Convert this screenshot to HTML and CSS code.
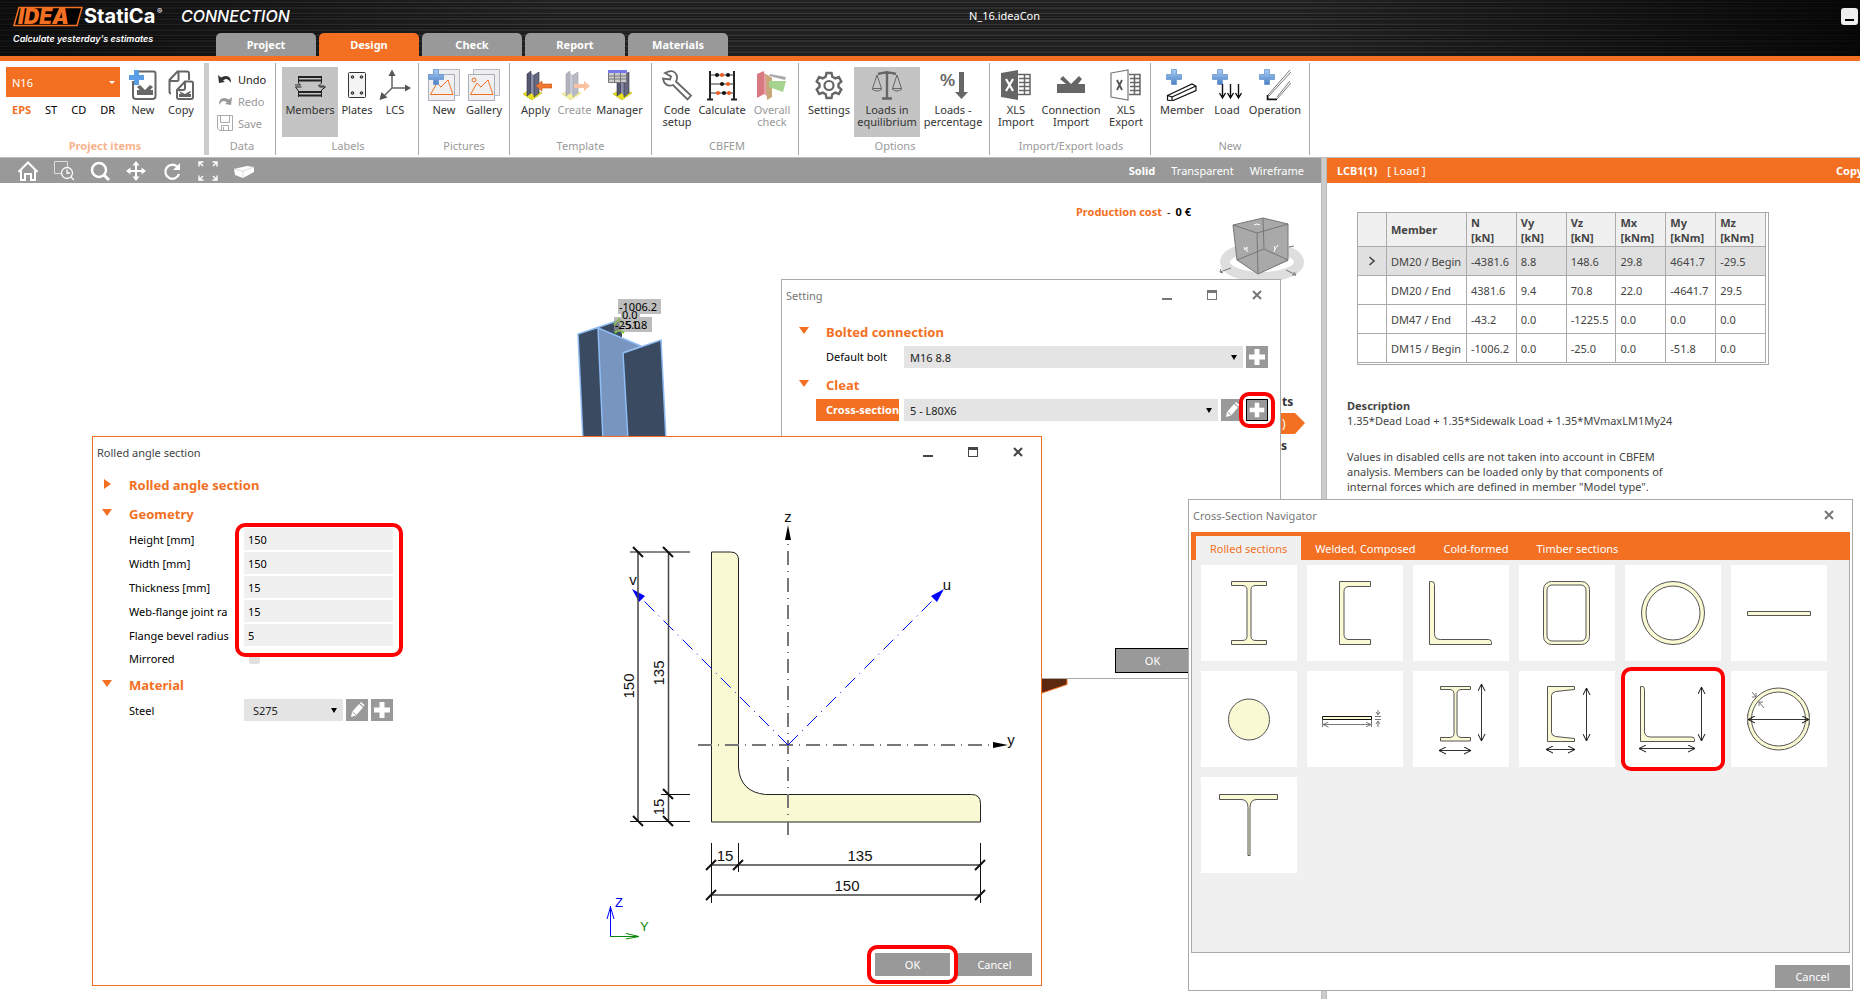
FILE: index.html
```html
<!DOCTYPE html>
<html lang="en">
<head>
<meta charset="utf-8">
<title>N_16.ideaCon</title>
<link rel="stylesheet" href="styles.css">
</head>
<body>
<svg class="defs" aria-hidden="true">
  <defs>
    <linearGradient id="blue" x1="0" y1="0" x2="0" y2="1"><stop offset="0" stop-color="#a9cdf2"/><stop offset="1" stop-color="#4a7fc4"/></linearGradient>
    <symbol id="cross" viewBox="0 0 16 16"><path d="M5.500.5h5v5h5v5h-5v5h-5v-5h-5v-5h5z" fill="url(#blue)" stroke="#6a98d0" stroke-width=".8"/></symbol>
    <symbol id="plus" viewBox="0 0 22 22"><path d="M8.500 3h5v5.500H19v5h-5.500V19h-5v-5.500H3v-5h5.500z" fill="#fff"/></symbol>
    <symbol id="pencil" viewBox="0 0 22 22"><path d="M5 18l1-5 7-8 4 3.500-7 8z" fill="#fff"/><path d="M13.800 4.200L15 3l3.500 3-1 1.500z" fill="#fff"/><path d="M6.500 13l3.500 3" stroke="#999"/></symbol>
    <symbol id="pic" viewBox="0 0 32 32"><path d="M5.500 .5h26v26h-26z" fill="#eee" stroke="#b4b8c4"/><path d="M.5 5.500h26v26H.5z" fill="#f0f0f0" stroke="#a9aebb"/><path d="M2.500 25.500L9 14l4 4 7-7 5 14.500z" fill="none" stroke="#f37023"/></symbol>
    <symbol id="column" viewBox="0 0 32 32"><path d="M3 25l9-5 10 4-10 7z" fill="#e8e020" stroke="#b0aa00" stroke-dasharray="1 1"/><path d="M7 5l4-3v22l-4 3z" fill="#555870" stroke="#303448" stroke-width=".6"/><path d="M11 4l4 3v20l-4-3z" fill="#8a90a8"/><path d="M14 6l5-3v21l-5 4z" fill="#66697f" stroke="#303448" stroke-width=".6"/></symbol>
    <marker id="oa" viewBox="0 0 8 8" refX="7" refY="4" markerWidth="8" markerHeight="8" markerUnits="userSpaceOnUse" orient="auto-start-reverse"><path d="M0 .5L7 4 0 7.500" fill="none" stroke="#111"/></marker>
    <marker id="sa" viewBox="0 0 6 6" refX="5.500" refY="3" markerWidth="6" markerHeight="6" markerUnits="userSpaceOnUse" orient="auto-start-reverse"><path d="M0 0.500L5.500 3 0 5.500" fill="none" stroke="#777"/></marker>
  </defs>
</svg>

<header class="titlebar">
  <svg class="logo" width="290" height="46" viewBox="0 0 290 46" role="img" aria-label="IDEA StatiCa Connection">
    <path d="M19 7.500h63l-5 18H14z" fill="#000" stroke="#f37023" stroke-width="1.500"/>
    <text x="18" y="24" class="logo-idea">IDEA</text>
    <text x="84" y="23" class="logo-name">StatiCa</text>
    <text x="157" y="14" class="logo-reg">®</text>
    <text x="181" y="22" class="logo-prod">CONNECTION</text>
    <text x="13" y="42" class="logo-tag">Calculate yesterday's estimates</text>
  </svg>
  <nav class="tabs">
    <button>Project</button><button class="on">Design</button><button>Check</button><button>Report</button><button>Materials</button>
  </nav>
  <div class="doc">N_16.ideaCon</div>
  <button class="minwin" aria-label="Minimize"></button>
</header>

<section class="ribbon">
  <div class="group g-items">
    <div class="row">
      <div class="proj">
        <div class="projsel"><select aria-label="Project item"><option>N16</option></select></div>
        <div class="modes"><button class="on">EPS</button><button>ST</button><button>CD</button><button>DR</button></div>
      </div>
      <button class="tool w38"><svg width="32" height="32" viewBox="0 0 32 32"><path d="M11 2.500h15.500q2 0 2 2V27q0 3-3 3H9q-3 0-3-3V12" fill="none" stroke="#666" stroke-width="2"/><path d="M10 18l3-2 5 5 5-5 3 2-3 3h3v5H10v-5h3z" fill="#666"/><path d="M7 1h5v5h5v5h-5v5H7v-5H2V6h5z" fill="#5b9ee5"/></svg><span>New</span></button>
      <button class="tool w38"><svg width="32" height="32" viewBox="0 0 32 32"><path d="M6 24.500q-1.500 0-1.500-2V11l8-8.500H22q2 0 2 2V11M4.500 12H12q1.500 0 1.500-1.500V3" fill="none" stroke="#666" stroke-width="2"/><path d="M12 21l8-8.500h6q2 0 2 2V28q0 2-2 2H14q-2 0-2-2zM12 21h6q2 0 2-2v-6" fill="#fff" stroke="#666" stroke-width="2"/><path d="M14 22l6 3 5-3 1 1-2 2h2v3H14v-3h2z" fill="#666"/></svg><span>Copy</span></button>
    </div>
    <h2 class="hot">Project items</h2>
  </div>
  <div class="group g-data">
    <div class="stack">
      <button><svg width="16" height="16" viewBox="0 0 16 16"><path d="M1 4l1 8 6-1-2-1.500q4-4 8 2.500Q14 2 4 6.500z" fill="#333"/></svg>Undo</button>
      <button class="off"><svg width="16" height="16" viewBox="0 0 16 16"><path d="M15 4l-1 8-6-1 2-1.500Q6 5.500 2 12 2 2 12 6.500z" fill="#999"/></svg>Redo</button>
      <button class="off"><svg width="16" height="16" viewBox="0 0 16 16"><path d="M.5.500h15v15H3l-2.500-2zM3.500.500v7h9v-7M4.500 15.500v-5h7v5M6.500 12v3" fill="none" stroke="#aaa"/></svg>Save</button>
    </div>
    <h2>Data</h2>
  </div>
  <div class="group g-labels">
    <div class="row">
      <button class="tool w56 sel"><svg width="32" height="32" viewBox="0 0 32 32"><path d="M4.500 8h23M4.500 11.500h23M4.500 23h23M4.500 26.500h23" stroke="#222" stroke-width="2"/><path d="M4.500 7v7l2 2H1M4.500 28v-6l-3-4h6M27.500 7v7l-3 3h6M27.500 28v-7l4-3h-6" fill="none" stroke="#222"/></svg><span>Members</span></button>
      <button class="tool w38"><svg width="32" height="32" viewBox="0 0 32 32"><rect x="7.500" y="3.500" width="17" height="25" rx="1" fill="#f4f4f4" stroke="#333"/><g fill="#999" stroke="#222"><circle cx="11.500" cy="8" r="1.300"/><circle cx="20.500" cy="8" r="1.300"/><circle cx="11.500" cy="24" r="1.300"/><circle cx="20.500" cy="24" r="1.300"/></g></svg><span>Plates</span></button>
      <button class="tool w38"><svg width="32" height="32" viewBox="0 0 32 32"><path d="M13 3v16h15M13 19L3 29" fill="none" stroke="#666" stroke-width="1.500"/><path d="M9.500 7L13 .5 16.500 7zM26 15.500l6 3.500-6 3.500zM.5 31l2-8 6 5.500z" fill="#555"/></svg><span>LCS</span></button>
    </div>
    <h2>Labels</h2>
  </div>
  <div class="group g-pics">
    <div class="row">
      <button class="tool w40"><svg width="32" height="32"><use href="#pic"/><use href="#cross" width="16" height="16"/></svg><span>New</span></button>
      <button class="tool w40"><svg width="32" height="32"><use href="#pic"/><circle cx="6" cy="11" r="2" fill="none" stroke="#f37023"/></svg><span>Gallery</span></button>
    </div>
    <h2>Pictures</h2>
  </div>
  <div class="group g-temp">
    <div class="row">
      <button class="tool w38"><svg width="32" height="32" viewBox="0 0 32 32"><use href="#column" width="32" height="32"/><path d="M16 17l6-5v3h10v4H22v3z" fill="#f07830" stroke="#c85818" stroke-width=".6"/></svg><span>Apply</span></button>
      <button class="tool w40 off"><svg width="32" height="32" viewBox="0 0 32 32"><g opacity=".45"><use href="#column" width="32" height="32"/><path d="M31 17l-6-5v3H15v4h10v3z" fill="#f07830"/></g></svg><span>Create</span></button>
      <button class="tool w50"><svg width="32" height="32" viewBox="0 0 32 32"><use href="#column" x="6" width="32" height="32"/><path d="M4.500 1.500h18v12h-18z" fill="#ccc" stroke="#777"/><path d="M4 1h19v3H4z" fill="#7878e8"/><path d="M5 7h18M5 10h18M10.500 4v10M16.500 4v10" stroke="#777"/></svg><span>Manager</span></button>
    </div>
    <h2>Template</h2>
  </div>
  <div class="group g-cbfem">
    <div class="row">
      <button class="tool w40"><svg width="32" height="32" viewBox="0 0 32 32"><path d="M4 4q9-5 12 3 .5 3-1 5.500L30 26.500l-3.500 4L12 16q-6 2-9-3L2 9.500l7 1 1-3z" fill="#fff" stroke="#666" stroke-width="1.800"/></svg><span>Code<br>setup</span></button>
      <button class="tool w50"><svg width="32" height="32" viewBox="0 0 32 32"><path d="M4 2v28M28 2v28M1 30.500h6M25 30.500h6" stroke="#222" stroke-width="2"/><path d="M4 6h24M4 15h24M4 24h24" stroke="#333"/><g fill="#111"><circle cx="11" cy="6" r="2"/><circle cx="22" cy="6" r="2"/><circle cx="16" cy="15" r="2"/><circle cx="18" cy="24" r="2"/></g><g fill="#f05a1a"><circle cx="16" cy="6" r="2"/><circle cx="22" cy="15" r="2"/><circle cx="12" cy="24" r="2"/><circle cx="23" cy="24" r="2"/></g></svg><span>Calculate</span></button>
      <button class="tool w50 off"><svg width="32" height="32" viewBox="0 0 32 32"><path d="M1 5l7-3v23l-7 4z" fill="#d97880"/><path d="M8 4l3 2v21l-3-2z" fill="#e0a0a0"/><path d="M10 5l6 4v19l-5 3z" fill="#c8a878"/><path d="M14 5l16 3-1 3-16-4z" fill="#aaa"/><path d="M13 12l17 0-3 11-14-5z" fill="#a6d490"/></svg><span>Overall<br>check</span></button>
    </div>
    <h2>CBFEM</h2>
  </div>
  <div class="group g-opts">
    <div class="row">
      <button class="tool w50"><svg width="32" height="32" viewBox="0 0 32 32"><path d="M13.500 4h5l.8 3.700 3 1.700 3.500-1.300 2.500 4.400-2.800 2.500v3l2.800 2.500-2.500 4.400-3.500-1.300-3 1.700-.8 3.700h-5l-.8-3.700-3-1.700-3.500 1.300-2.500-4.400L6.500 18v-3l-2.800-2.500 2.500-4.400 3.500 1.300 3-1.700z" fill="none" stroke="#666" stroke-width="2.400"/><circle cx="16" cy="16.500" r="4.500" fill="none" stroke="#666" stroke-width="2.200"/></svg><span>Settings</span></button>
      <button class="tool w66 sel"><svg width="32" height="32" viewBox="0 0 32 32"><path d="M16 2v27M7 5q9-3 18 0M11 29.500h10" fill="none" stroke="#666" stroke-width="2.400"/><path d="M6 6L1.500 19.500h9zM26 6l-4.500 13.500h9zM1 20q5 4 10 0M21 20q5 4 10 0" fill="none" stroke="#666"/></svg><span>Loads in<br>equilibrium</span></button>
      <button class="tool w66"><svg width="32" height="32" viewBox="0 0 32 32"><text x="3" y="17" class="pct">%</text><path d="M22 3h5v20h4l-6.500 7L18 23h4z" fill="#666"/></svg><span>Loads -<br>percentage</span></button>
    </div>
    <h2>Options</h2>
  </div>
  <div class="group g-io">
    <div class="row">
      <button class="tool w40"><svg width="32" height="32" viewBox="0 0 32 32"><path d="M1 4l17-3v30L1 28z" fill="#666"/><path d="M6 10l7 12M13 10L6 22" stroke="#fff" stroke-width="2.200"/><path d="M18 5.500h12v20H18M19 9.500h11M19 13.500h11M19 17.500h11M19 21.500h11M24.500 5v20" fill="none" stroke="#666" stroke-width="1.500"/></svg><span>XLS<br>Import</span></button>
      <button class="tool w70"><svg width="32" height="32" viewBox="0 0 32 32"><path d="M2 15h9L5 10l3-3 8 8 8-8 3 3-4 5h7v9H2z" fill="#666"/></svg><span>Connection<br>Import</span></button>
      <button class="tool w40"><svg width="32" height="32" viewBox="0 0 32 32"><path d="M1 4l17-3v30L1 28z" fill="#fff" stroke="#777" stroke-width="1.200"/><path d="M7 11l5 10M12 11L7 21" stroke="#555" stroke-width="1.800"/><path d="M19 5.500h11v20H19M20 9.500h10M20 13.500h10M20 17.500h10M20 21.500h10M24.500 5v20" fill="none" stroke="#666" stroke-width="1.500"/></svg><span>XLS<br>Export</span></button>
    </div>
    <h2>Import/Export loads</h2>
  </div>
  <div class="group g-new">
    <div class="row">
      <button class="tool w50"><svg width="32" height="32" viewBox="0 0 32 32"><use href="#cross" width="16" height="16"/><path d="M1.500 26.500L26 15l4 2v4.500L6 32M1.500 26.500L6 28v4l-4.500-1zM6 28l24-11" fill="none" stroke="#111" stroke-width="1.200"/></svg><span>Member</span></button>
      <button class="tool w40"><svg width="32" height="32" viewBox="0 0 32 32"><use href="#cross" x="1" width="16" height="16"/><path d="M11.500 15v13M8.500 24l3 5 3-5M19.500 15v13M16.500 24l3 5 3-5M27.500 15v13M24.500 24l3 5 3-5" fill="none" stroke="#111" stroke-width="1.400"/></svg><span>Load</span></button>
      <button class="tool w56"><svg width="32" height="32" viewBox="0 0 32 32"><use href="#cross" width="16" height="16"/><path d="M31 1L9 26v4h9l14-16M32 3L10 27M31 12L18 28" fill="none" stroke="#777"/><path d="M8.500 26v4.500H18" fill="none" stroke="#111" stroke-width="1.600"/></svg><span>Operation</span></button>
    </div>
    <h2>New</h2>
  </div>
</section>

<main class="work">
  <section class="view">
    <div class="viewbar">
      <div class="viewtools">
        <button aria-label="Home"><svg width="20" height="20" viewBox="0 0 20 20"><path d="M.5 11L10 1.500l9.500 9.500M3 9.500v9.500h4v-6h6v6h4V9.500" fill="none" stroke="#fff" stroke-width="2"/></svg></button>
        <button aria-label="Zoom window"><svg width="20" height="20" viewBox="0 0 20 20"><path d="M7 12.500H.5V.5h13V6" fill="none" stroke="#ddd"/><circle cx="13" cy="12" r="5.500" fill="none" stroke="#fff" stroke-width="1.300"/><path d="M13 8.500V12h3M17 16l3 3" fill="none" stroke="#fff" stroke-width="1.300"/></svg></button>
        <button aria-label="Zoom"><svg width="20" height="20" viewBox="0 0 20 20"><circle cx="9" cy="9" r="7" fill="none" stroke="#fff" stroke-width="2.500"/><path d="M14 14l5 5" stroke="#fff" stroke-width="3"/></svg></button>
        <button aria-label="Pan"><svg width="20" height="20" viewBox="0 0 20 20"><path d="M10 2v16M2 10h16" stroke="#fff" stroke-width="2"/><path d="M6.500 4.500L10 0l3.500 4.500zM6.500 15.500L10 20l3.500-4.500zM4.500 6.500L0 10l4.500 3.500zM15.500 6.500L20 10l-4.500 3.500z" fill="#fff"/></svg></button>
        <button aria-label="Rotate"><svg width="20" height="20" viewBox="0 0 20 20"><path d="M15 5.500A7 7 0 1 0 17 13" fill="none" stroke="#fff" stroke-width="2.300"/><path d="M18 2v7h-7z" fill="#fff"/></svg></button>
        <button aria-label="Fit"><svg width="20" height="20" viewBox="0 0 20 20"><path d="M1 5.500V1h4.500M1 1l4 4M14.500 1H19v4.500M19 1l-4 4M1 14.500V19h4.500M1 19l4-4M19 14.500V19h-4.500M19 19l-4-4" fill="none" stroke="#fff" stroke-width="1.400"/></svg></button>
        <button aria-label="Solid view"><svg width="20" height="20" viewBox="0 0 20 20"><path d="M0 8l13-3 7 1v5l-11 6-8-3z" fill="#fff"/><path d="M0 8l9 2 11-4M9 10v7" fill="none" stroke="#ccc" stroke-width=".7"/></svg></button>
      </div>
      <div class="viewmodes"><button class="on">Solid</button><button>Transparent</button><button>Wireframe</button></div>
    </div>
    <p class="cost"><b>Production cost</b> <span>-</span> <strong>0 €</strong></p>
  </section>
  <div class="splitter"></div>
  <section class="panel">
    <div class="panelbar"><b>LCB1(1)</b><span>[ Load ]</span><button>Copy</button></div>
    <div class="tablebox">
      <table>
        <thead><tr><th class="c0"></th><th class="c1">Member</th><th>N<br>[kN]</th><th>Vy<br>[kN]</th><th>Vz<br>[kN]</th><th>Mx<br>[kNm]</th><th>My<br>[kNm]</th><th>Mz<br>[kNm]</th></tr></thead>
        <tbody>
          <tr class="cur"><td><svg width="8" height="10" viewBox="0 0 8 10"><path d="M1.500 1l4.500 4-4.500 4" fill="none" stroke="#444" stroke-width="1.600"/></svg></td><td>DM20 / Begin</td><td>-4381.6</td><td>8.8</td><td>148.6</td><td>29.8</td><td>4641.7</td><td>-29.5</td></tr>
          <tr><td></td><td>DM20 / End</td><td>4381.6</td><td>9.4</td><td>70.8</td><td>22.0</td><td>-4641.7</td><td>29.5</td></tr>
          <tr><td></td><td>DM47 / End</td><td>-43.2</td><td>0.0</td><td>-1225.5</td><td>0.0</td><td>0.0</td><td>0.0</td></tr>
          <tr><td></td><td>DM15 / Begin</td><td>-1006.2</td><td>0.0</td><td>-25.0</td><td>0.0</td><td>-51.8</td><td>0.0</td></tr>
        </tbody>
      </table>
    </div>
    <div class="desc">
      <h3>Description</h3>
      <p>1.35*Dead Load + 1.35*Sidewalk Load + 1.35*MVmaxLM1My24</p>
      <p>Values in disabled cells are not taken into account in CBFEM<br>analysis. Members can be loaded only by that components of<br>internal forces which are defined in member "Model type".</p>
    </div>
  </section>
</main>

<svg class="model" width="110" height="150" viewBox="570 290 110 150">
  <path d="M598 328l20-8 4 14v16z" fill="#3a4a60"/>
  <path d="M578 334l20-6 5 112h-20z" fill="#3a4a60"/>
  <path d="M598 328l43 18-17 6 4 88h-25z" fill="#7795bf"/>
  <path d="M623 353l38-13 5 100h-38z" fill="#3a4a60"/>
  <path d="M617 321l-39 13 5 106M598 328l5 112M598 328l43 18M628 440l-5-87 38-13 5 100" fill="none" stroke="#8fbcf4" stroke-width="1.500"/>
  <path d="M614 325l5-6 4 5M615 333q4-5 9 0" fill="none" stroke="#6fe000" stroke-width="2"/>
  <g fill="#9a9a9a" fill-opacity=".65"><path d="M618 299h43v15h-43zM621 308h19v12h-19zM614 317h38v15h-38zM614 317h27v15h-27z"/></g>
  <g class="tag"><text x="619" y="311">-1006.2</text><text x="622" y="319">0.0</text><text x="615" y="329">-25.0</text><text x="622" y="329">-51.8</text></g>
</svg>
<svg class="cube" width="100" height="74" viewBox="1210 210 100 74">
  <ellipse cx="1262" cy="262" rx="37" ry="15" fill="none" stroke="#dedede" stroke-width="10"/>
  <path d="M1233 225l30-7 25 6 0 37-30 13-21-14z" fill="#a9a9a9"/>
  <path d="M1233 225l30-7 25 6-31 9zM1257 233l1 41M1233 225l4 35 21 14 30-14V224M1263 218l1 31-27 11M1264 249l24 11" fill="none" stroke="#777"/>
  <path d="M1254 225l3-1 3 1M1244 247l1 3 2-3v5M1274 246l1 3 3-4M1275 249l-1 3" fill="none" stroke="#fff"/>
  <path d="M1231 268l-11 4 1-3M1220 272l3 1M1286 270l10 5-4 0M1296 275l-2-3M1289 247l5-1" fill="none" stroke="#777"/>
</svg>
<svg class="arrowtab" width="30" height="66" viewBox="0 0 30 66"><path d="M0 19h14l10 10-10 11H0z" fill="#f37023"/><g class="arrowtxt"><text x="1" y="12">ts</text><text x="1" y="34" class="white">)</text><text x="0" y="56">s</text></g></svg>
<svg class="stub" width="30" height="16" viewBox="0 0 30 16"><path d="M0 0h25v5.500L0 14z" fill="#5c2910"/><path d="M25 0v5.500L0 14" fill="none" stroke="#f37023"/></svg>

<section class="win setting" aria-label="Setting">
  <div class="wtitle"><span>Setting</span><div class="wbtns"><button class="min" aria-label="Minimize"></button><button class="max" aria-label="Maximize"></button><button class="cls" aria-label="Close"><svg width="10" height="10" viewBox="0 0 10 10"><path d="M1 1l8 8M9 1L1 9" stroke="currentColor" stroke-width="2"/></svg></button></div></div>
  <div class="sbody">
    <h3 class="sec open">Bolted connection</h3>
    <div class="srow"><label for="bolt">Default bolt</label><div class="dd"><select id="bolt"><option>M16 8.8</option></select></div><button class="sq" aria-label="Add"><svg><use href="#plus"/></svg></button></div>
    <h3 class="sec open">Cleat</h3>
    <div class="srow"><label for="cs" class="hl">Cross-section</label><div class="dd"><select id="cs"><option>5 - L80X6</option></select></div><button class="sq" aria-label="Edit"><svg><use href="#pencil"/></svg></button><button class="sq focus mark" aria-label="Add"><svg><use href="#plus"/></svg></button></div>
  </div>
  <div class="wfoot"><button class="btn focus">OK</button></div>
</section>

<section class="win rolled" aria-label="Rolled angle section">
  <div class="wtitle"><span>Rolled angle section</span><div class="wbtns"><button class="min" aria-label="Minimize"></button><button class="max" aria-label="Maximize"></button><button class="cls" aria-label="Close"><svg width="10" height="10" viewBox="0 0 10 10"><path d="M1 1l8 8M9 1L1 9" stroke="currentColor" stroke-width="2"/></svg></button></div></div>
  <div class="rbody">
    <form class="form">
      <h3 class="sec shut">Rolled angle section</h3>
      <h3 class="sec open">Geometry</h3>
      <div class="fields">
        <div class="frow"><label for="h">Height [mm]</label><input id="h" type="text" value="150"></div>
        <div class="frow"><label for="w">Width [mm]</label><input id="w" type="text" value="150"></div>
        <div class="frow"><label for="t">Thickness [mm]</label><input id="t" type="text" value="15"></div>
        <div class="frow"><label for="r">Web-flange joint ra</label><input id="r" type="text" value="15"></div>
        <div class="frow"><label for="b">Flange bevel radius</label><input id="b" type="text" value="5"></div>
      </div>
      <div class="frow"><label for="m">Mirrored</label><input id="m" type="checkbox"></div>
      <h3 class="sec open">Material</h3>
      <div class="frow"><label for="s">Steel</label><div class="dd"><select id="s"><option>S275</option></select></div><button type="button" class="sq" aria-label="Edit"><svg><use href="#pencil"/></svg></button><button type="button" class="sq" aria-label="Add"><svg><use href="#plus"/></svg></button></div>
    </form>
    <svg class="draw" width="440" height="440" viewBox="0 0 440 440">
      <path d="M121.500 62h19q8 0 8 8v208q2 24 27 26.500h206q9 0 9 9v18.500H121.500z" fill="#f9f9d3" stroke="#222"/>
      <path d="M198 345V51" stroke="#777" stroke-width="2" stroke-dasharray="14 6 1 6"/>
      <path d="M108 255h295" stroke="#777" stroke-width="2" stroke-dasharray="14 6 1 6"/>
      <path d="M198 35l3 15h-6zM418 255l-15-3v6z" fill="#000"/>
      <g fill="none" stroke="#00f" stroke-dasharray="14 6 1 6"><path d="M198 255L52 109"/><path d="M198 255L344 109"/></g>
      <path d="M42 99l13 7-6 6zM354 99l-13 7 6 6z" fill="#00f"/>
      <g stroke="#444" stroke-width="1.500"><path d="M48 62v270M78.500 62v270M121 375h270M121 405h270"/></g>
      <g stroke="#111"><path d="M40 62h60M71 304.500h29M40 331.500h60M121.500 353v60M148.500 353v29M390.500 353v60"/></g>
      <g stroke="#111" stroke-width="2"><path d="M43 57l10 10M73 57l10 10M73 299l10 10M73 326l10 10M43 326l10 10M116 380l10-10M143 380l10-10M385 380l10-10M116 410l10-10M385 410l10-10"/></g>
      <g class="dim">
        <text x="135" y="371">15</text><text x="270" y="371">135</text><text x="257" y="401">150</text>
        <text transform="translate(44 196) rotate(-90)">150</text><text transform="translate(74 183) rotate(-90)">135</text><text transform="translate(74 317) rotate(-90)">15</text>
        <text x="198" y="32">z</text><text x="43" y="95">v</text><text x="357" y="100">u</text><text x="421" y="255">y</text>
      </g>
    </svg>
  </div>
  <svg class="ucs" width="60" height="52" viewBox="0 0 60 52"><path d="M10.500 46V16M7 29l3.500-12L14 29" fill="none" stroke="#00f"/><path d="M10 46.500h29M26 43.500l13 3-13 2.500" fill="none" stroke="#0a8a0a"/><text x="15" y="17" fill="#00f">Z</text><text x="40" y="41" fill="#0a8a0a">Y</text></svg>
  <div class="wfoot"><button class="btn mark">OK</button><button class="btn">Cancel</button></div>
</section>

<section class="win nav" aria-label="Cross-Section Navigator">
  <div class="wtitle"><span>Cross-Section Navigator</span><div class="wbtns"><button class="cls" aria-label="Close"><svg width="10" height="10" viewBox="0 0 10 10"><path d="M1 1l8 8M9 1L1 9" stroke="currentColor" stroke-width="2"/></svg></button></div></div>
  <div class="ntabs"><button class="on">Rolled sections</button><button>Welded, Composed</button><button>Cold-formed</button><button>Timber sections</button></div>
  <div class="tiles">
    <button aria-label="I section"><svg viewBox="0 0 96 96"><path d="M30.500 16.500h35v4H55q-5 0-5 4v47q0 4 5 4h10.500v4h-35v-4H41q5 0 5-4v-47q0-4-5-4H30.500z"/></svg></button>
    <button aria-label="Channel"><svg viewBox="0 0 96 96"><path d="M32.500 16.500h31v5H42q-5 0-5 5v43q0 5 5 5h21.500v5h-31z"/></svg></button>
    <button aria-label="Angle"><svg viewBox="0 0 96 96"><path d="M16.500 16.500h2q3 0 3 3v49q0 6 6 6h48q3 0 3 3v2h-62z"/></svg></button>
    <button aria-label="Rectangular tube"><svg viewBox="0 0 96 96"><rect x="24.500" y="16.500" width="46" height="63" rx="8"/><rect x="28" y="20" width="39" height="56" rx="5" class="hole"/></svg></button>
    <button aria-label="Circular tube"><svg viewBox="0 0 96 96"><circle cx="48" cy="48" r="31.500"/><circle cx="48" cy="48" r="27" class="hole"/></svg></button>
    <button aria-label="Flat"><svg viewBox="0 0 96 96"><path d="M16.500 46.500h63v4h-63z"/></svg></button>
    <button aria-label="Round bar"><svg viewBox="0 0 96 96"><circle cx="48" cy="48.500" r="20.500"/></svg></button>
    <button aria-label="Flat with dimensions"><svg viewBox="0 0 96 96"><path d="M15.500 45.500h49v3h-49z" class="bold"/><path d="M16 53.500h48" class="sdim"/><path d="M15.500 49v7M64.500 49v7M68 45.500h6M68 48.500h6M71 39v5l-2-3M71 44l2-3M71 56v-6l-2 3M71 50l2 3" class="thin"/></svg></button>
    <button aria-label="I section with dimensions"><svg viewBox="0 0 96 96"><path d="M27.500 15.500h30v3H49q-5 0-5 4v40q0 4 5 4h8.500v3.500h-30v-3.500H36q5 0 5-4v-40q0-4-5-4h-8.500z"/><path d="M68.500 13v57" class="odim"/><path d="M26 79.500h32" class="odim"/></svg></button>
    <button aria-label="Channel with dimensions"><svg viewBox="0 0 96 96"><path d="M28.500 15.500h27v3l-19 2q-4 1-4 4v37q0 3 4 4l19 2v3h-27z"/><path d="M67.500 17v53" class="odim"/><path d="M27 78.500h29" class="odim"/></svg></button>
    <button class="mark" aria-label="Angle with dimensions"><svg viewBox="0 0 96 96"><path d="M15.500 15.500h2q2 0 2 3V60q0 6 6 6h41q3 0 3 2.500v2h-54z"/><path d="M76.500 16v54" class="odim"/><path d="M14 77.500h56" class="odim"/></svg></button>
    <button aria-label="Tube with dimensions"><svg viewBox="0 0 96 96"><circle cx="47.500" cy="48" r="31"/><circle cx="47.500" cy="48" r="27" class="hole"/><path d="M17 48.500h61" class="odim"/><path d="M21 21l4 5M25 22v4h-4M33 37l-5-6M32 31h-4v4M16.500 43v11M78.500 43v11" class="thin"/></svg></button>
    <button aria-label="T section"><svg viewBox="0 0 96 96"><path d="M18.500 17.500h58v5H56q-7 0-7 8v48h-2v-48q0-8-7-8H18.500z"/></svg></button>
  </div>
  <div class="wfoot"><button class="btn">Cancel</button></div>
</section>
</body>
</html>
```

FILE: styles.css
```css
* { box-sizing: border-box; }
html, body { margin: 0; height: 100%; }
body {
  display: flex;
  flex-direction: column;
  position: relative;
  overflow: hidden;
  background: #fff;
  color: #444;
  font: 11px/15px "Noto Sans", "Open Sans", sans-serif;
}
button, select, input { font: inherit; color: inherit; border: 0; border-radius: 0; background: none; padding: 0; margin: 0; }
h2, h3, p { margin: 0; font-size: inherit; }
svg { display: block; }
.defs { position: absolute; width: 0; height: 0; }

/* title bar */
.titlebar {
  position: relative;
  display: flex;
  align-items: flex-end;
  height: 61px;
  flex: none;
  border-bottom: 5px solid #f37023;
  background:
    linear-gradient(90deg, rgba(0,0,0,.6), rgba(0,0,0,0) 30%, rgba(0,0,0,0) 70%, rgba(0,0,0,.8)),
    repeating-linear-gradient(180deg, #222 0 2px, #383838 2px 3px, #1c1c1c 3px 5px, #2c2c2c 5px 6px, #161616 6px 7px, #303030 7px 9px, #202020 9px 11px);
}
.logo { position: absolute; left: 0; top: 0; }
.logo text { fill: #fff; font-family: Inter, Roboto, sans-serif; font-style: italic; }
.logo .logo-idea { fill: #f37023; font-size: 21px; font-weight: 900; }
.logo .logo-name { font-size: 20px; font-weight: 700; font-style: normal; }
.logo .logo-reg { font-size: 8px; font-style: normal; }
.logo .logo-prod { font-size: 16px; font-weight: 500; }
.logo .logo-tag { font-size: 9px; font-weight: 600; }
.tabs { display: flex; gap: 3px; margin-left: 216px; }
.tabs button { width: 100px; height: 23px; border-radius: 5px 5px 0 0; background: #999; color: #fff; font-weight: 700; }
.tabs .on { background: #f37023; }
.doc { position: absolute; left: 0; right: 0; top: 8px; padding-left: 149px; text-align: center; color: #fff; }
.minwin { position: absolute; right: 2px; top: 8px; width: 17px; height: 17px; border-radius: 3px; background: #eee; }
.minwin::after { content: ""; position: absolute; left: 4px; bottom: 4px; width: 9px; height: 2px; background: #000; }

/* ribbon */
.ribbon { display: flex; flex: none; height: 97px; padding: 2px 0; border-bottom: 1px solid #bbb; }
.group { display: flex; flex-direction: column; flex: none; border-right: 1px solid #aaa; padding-top: 4px; }
.group h2 { margin-top: auto; padding-bottom: 2px; text-align: center; font-weight: 400; color: #999; }
.group h2.hot { color: #f7b48c; font-weight: 700; }
.g-items { width: 209px; border-right: 5px solid #ccc; padding-left: 6px; }
.g-data { width: 67px; }
.g-labels { width: 143px; padding-left: 2px; }
.g-pics { width: 91px; }
.g-temp { width: 142px; }
.g-cbfem { width: 147px; padding-left: 4px; }
.g-opts { width: 191px; padding-left: 2px; }
.g-io { width: 161px; padding-left: 2px; }
.g-new { width: 159px; }
.row { display: flex; justify-content: center; }
.g-items .row { justify-content: flex-start; }
.tool { display: flex; flex-direction: column; align-items: center; height: 70px; padding-top: 2px; line-height: 12px; white-space: nowrap; color: #333; }
.tool span { margin-top: 3px; }
.sel { background: #c4c4c4; }
.off { color: #999 !important; }
.w38 { width: 38px; } .w40 { width: 40px; } .w50 { width: 50px; }
.w56 { width: 56px; } .w66 { width: 66px; } .w70 { width: 70px; }
.pct { font: 700 17px "Liberation Sans", sans-serif; fill: #666; }
.proj { width: 118px; }
.projsel { position: relative; width: 114px; background: #f37023; color: #fff; }
.projsel select { appearance: none; width: 100%; height: 30px; padding-left: 6px; }
.projsel::after { content: ""; position: absolute; right: 5px; top: 14px; border: 3px solid transparent; border-top-color: #fff; border-bottom: 0; }
.modes { display: flex; gap: 14px; padding: 5px 0 0 6px; color: #000; }
.modes .on { color: #f37023; font-weight: 700; }
.stack { display: flex; flex-direction: column; gap: 6px; padding: 4px 0 0 8px; }
.stack button { display: flex; align-items: center; gap: 5px; height: 16px; color: #222; }

/* work area */
.work { flex: 1; display: grid; grid-template-columns: 1321fr 6px 533fr; min-height: 0; }
.view, .panel { min-width: 0; overflow: hidden; }
.viewbar { display: flex; justify-content: space-between; align-items: center; height: 25px; padding: 0 17px 0 18px; background: #999; color: #fff; }
.viewtools { display: flex; gap: 16px; }
.viewmodes { display: flex; gap: 16px; }
.viewmodes .on { font-weight: 700; }
.cost { display: flex; gap: 5px; justify-content: flex-end; padding: 21px 130px 0 0; color: #000; }
.cost b { color: #f37023; }
.splitter { background: #ccc; border: solid #bbb; border-width: 0 1px; }
.panelbar { display: flex; align-items: center; gap: 10px; height: 25px; padding-left: 10px; background: #f37023; color: #fff; }
.panelbar button { margin-left: auto; width: 24px; overflow: hidden; font-weight: 700; text-align: left; }
.tablebox { width: 412px; margin: 29px 0 0 30px; border: 1px solid #aaa; padding: 0 2px 1px 0; }
table { border-collapse: collapse; table-layout: fixed; width: 409px; margin: -1px 0 0 -1px; }
th, td { border: 1px solid #aaa; padding: 0 0 0 4px; text-align: left; white-space: nowrap; }
th { height: 34px; background: #f0f0f0; }
td { height: 29px; }
td:first-child { padding-left: 10px; }
.c0 { width: 29px; } .c1 { width: 80px; }
.cur { background: #e0e0e0; }
.desc { padding: 33px 20px 0; }
.desc p + p { margin-top: 21px; }

/* drawings lying over the viewport */
.model { position: absolute; left: 570px; top: 290px; }
.cube { position: absolute; left: 1210px; top: 210px; }
.arrowtab { position: absolute; left: 1281px; top: 394px; }
.stub { position: absolute; left: 1042px; top: 679px; }
.tag text { font-size: 11px; fill: #000; }
.arrowtxt text { font-size: 12px; font-weight: 700; fill: #333; }
.arrowtxt .white { fill: #fff; font-weight: 400; }

/* windows */
.win { position: absolute; display: flex; flex-direction: column; background: #fff; border: 1px solid #aaa; }
.wtitle { display: flex; justify-content: space-between; align-items: center; height: 32px; flex: none; padding: 0 18px 2px 4px; color: #777; }
.wbtns { display: flex; gap: 35px; }
.wbtns button { width: 10px; height: 10px; }
.wbtns .min { border-bottom: 2px solid currentColor; height: 9px; margin-top: 1px; }
.wbtns .max { border: 1px solid currentColor; border-top-width: 3px; }
.sec { position: relative; color: #f37023; font-size: 13px; line-height: 18px; font-weight: 700; padding-left: 28px; }
.sec::before { content: ""; position: absolute; }
.open::before { left: 1px; top: 4px; border: 5px solid transparent; border-top: 7px solid #f37023; border-bottom: 0; }
.shut::before { left: 3px; top: 3px; border: 5px solid transparent; border-left: 7px solid #f37023; border-right: 0; }
.dd { position: relative; flex: 1; background: #e4e4e4; color: #222; }
.dd select { appearance: none; width: 100%; height: 22px; padding-left: 6px; }
.dd::after { content: ""; position: absolute; right: 6px; top: 9px; border: 3px solid transparent; border-top: 5px solid #000; border-bottom: 0; pointer-events: none; }
.sq { flex: none; width: 22px; height: 22px; background: #999; }
.sq svg { width: 100%; height: 100%; }
.sq.focus, .btn.focus { border: 1px solid #000; }
.wfoot { display: flex; justify-content: flex-end; gap: 7px; margin-top: auto; }
.btn { width: 75px; height: 23px; background: #999; color: #fff; }
.mark { position: relative; }
.mark::after { content: ""; position: absolute; inset: -8px; border: 4px solid #f00; border-radius: 10px; }

.setting { left: 781px; top: 279px; width: 500px; height: 400px; }
.sbody { padding: 11px 12px 0 16px; }
.srow { display: flex; gap: 3px; align-items: center; margin: 5px 0 8px; }
.srow label { flex: none; width: 83px; margin: 0 2px 0 18px; line-height: 22px; padding-left: 10px; color: #000; white-space: nowrap; overflow: hidden; }
.srow .hl { background: #f37023; color: #fff; font-weight: 700; }
.setting .wfoot { padding: 0 90px 5px 0; }
.setting .wfoot .btn { height: 25px; }

.rolled { left: 92px; top: 436px; width: 950px; height: 550px; border-color: #f37023; }
.rolled .wtitle { color: #444; }
.rbody { display: flex; justify-content: space-between; padding: 7px 11px 0 8px; }
.form { width: 292px; }
.shut { margin-bottom: 11px; }
.frow { display: flex; gap: 3px; align-items: center; height: 24px; padding-left: 28px; color: #000; }
.frow label { flex: none; width: 112px; white-space: nowrap; }
.frow input[type=text] { flex: 1; min-width: 0; height: 22px; background: #f0f0f0; padding-left: 4px; }
.frow input[type=checkbox] { appearance: none; width: 11px; height: 11px; margin-left: 5px; border-radius: 2px; background: #e0e0e0; }
.fields { position: relative; margin-top: 4px; }
.fields::after { content: ""; position: absolute; left: 134px; right: -10px; top: -4px; bottom: -10px; border: 4px solid #f00; border-radius: 10px; pointer-events: none; }
.fields + .frow { height: 22px; }
.fields + .frow + .sec { margin: 7px 0 4px; }
.form .dd select { padding-left: 9px; }
.draw { margin-top: 14px; }
.dim text { font: 15px "Liberation Sans", sans-serif; fill: #111; text-anchor: middle; }
.ucs { position: absolute; left: 507px; top: 453px; }
.ucs text { font: 13px "Liberation Sans", sans-serif; }
.rolled .wfoot { padding: 0 9px 9px 0; }

.nav { left: 1188px; top: 499px; width: 665px; height: 492px; padding: 0 2px 2px; }
.nav .wtitle { padding: 0 16px 2px 2px; }
.ntabs { display: flex; height: 28px; flex: none; padding: 4px 0 0 5px; background: #f37023; color: #fff; }
.ntabs button { padding: 0 14px; }
.ntabs .on { background: #f0f0f0; color: #f37023; }
.tiles { display: grid; grid-template-columns: repeat(6, 96px); grid-auto-rows: 96px; gap: 10px; align-content: start; flex: 1; margin-bottom: 12px; padding: 5px 9px; background: #f0f0f0; border: 1px solid #aaa; border-top: 0; }
.tiles button { background: #fff; }
.tiles svg { width: 96px; height: 96px; fill: #f9f9d3; stroke: #555; }
.tiles .hole { fill: #fff; }
.tiles .bold { stroke: #111; }
.tiles .odim { stroke: #333; marker-start: url(#oa); marker-end: url(#oa); }
.tiles .sdim { stroke: #777; marker-start: url(#sa); marker-end: url(#sa); }
.tiles .thin { stroke: #777; fill: none; }
.tiles .mark::after { inset: -4px; }
```
